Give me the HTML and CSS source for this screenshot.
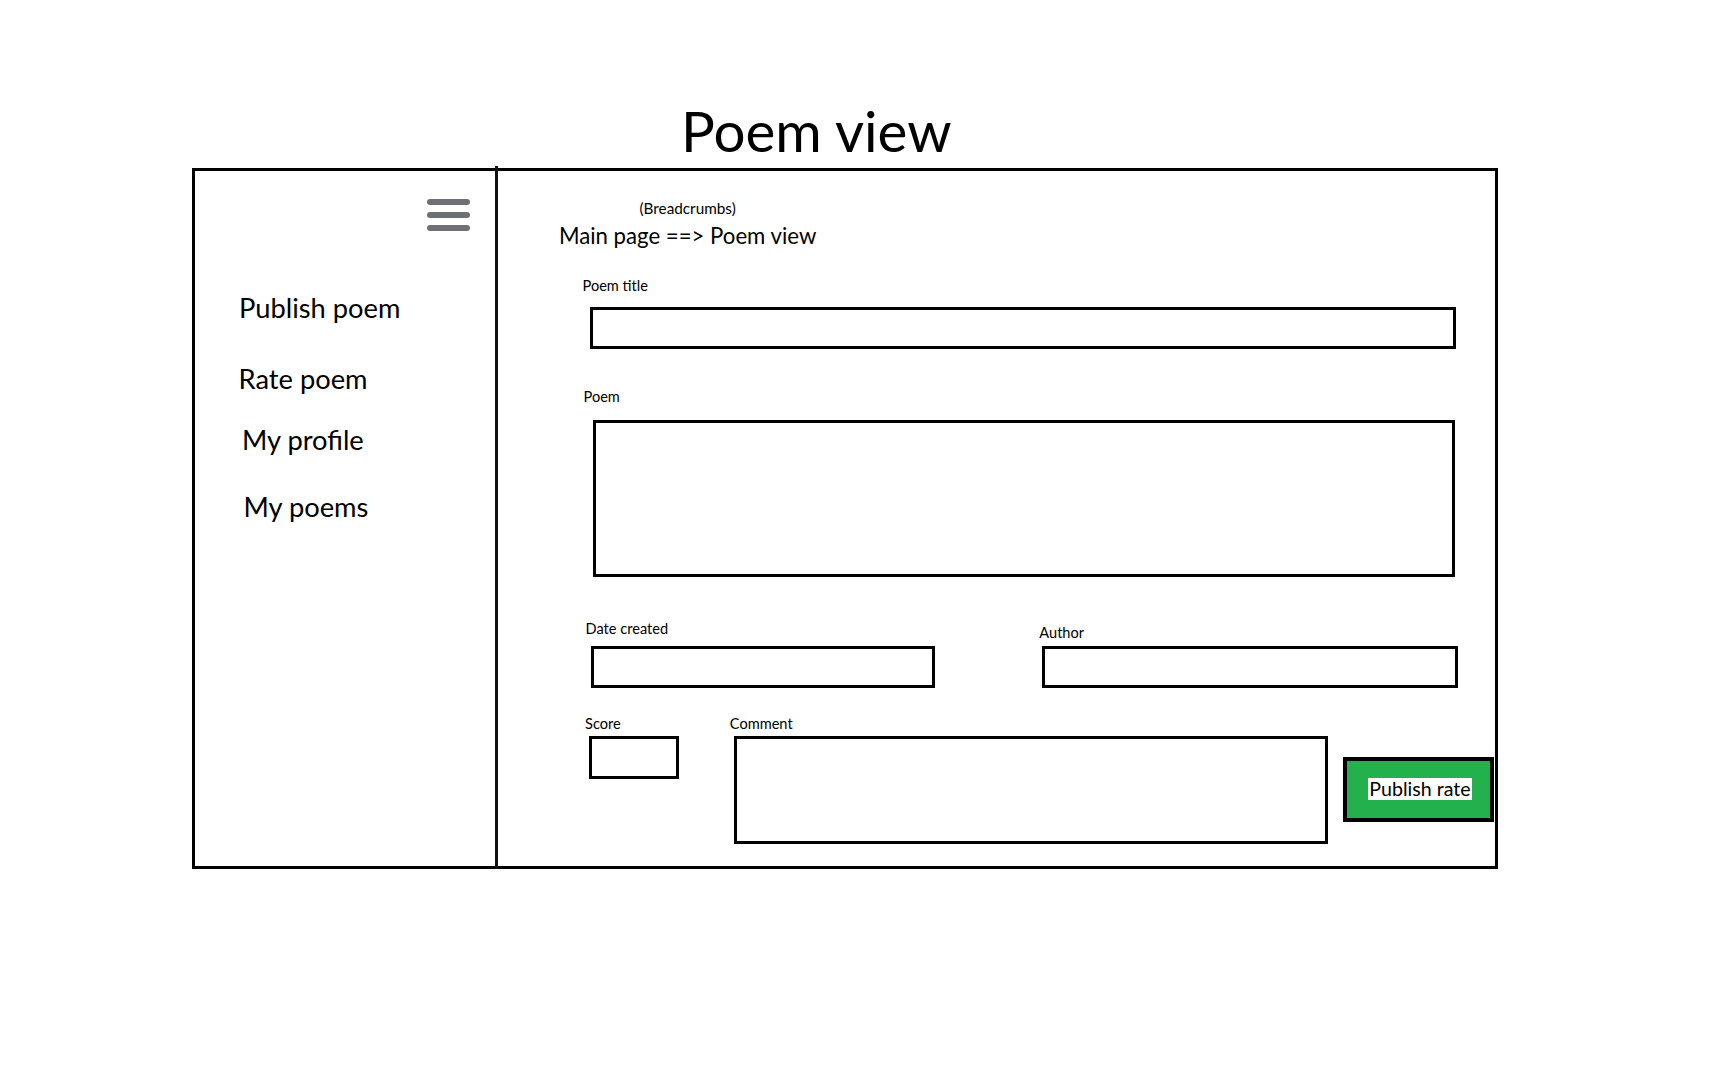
FILE: index.html
```html
<!DOCTYPE html>
<html lang="en">
<head>
<meta charset="utf-8">
<title>Poem view</title>
<link rel="stylesheet" href="styles.css">
</head>
<body>
<h1 class="page-title">Poem view</h1>
<div class="frame">
  <aside class="sidebar">
    <div class="menu-btn" aria-label="Menu"><span></span><span></span><span></span></div>
    <nav class="nav">
      <a class="nav-item nav-publish">Publish poem</a>
      <a class="nav-item nav-rate">Rate poem</a>
      <a class="nav-item nav-profile">My profile</a>
      <a class="nav-item nav-poems">My poems</a>
    </nav>
  </aside>
  <main class="content">
    <div class="crumbs-label">(Breadcrumbs)</div>
    <div class="crumbs">Main page ==&gt; Poem view</div>

    <label class="field-label title-label">Poem title</label>
    <input class="box title-box" type="text">

    <label class="field-label poem-label">Poem</label>
    <textarea class="box poem-box"></textarea>

    <div class="row-meta">
      <div class="col date-col">
        <label class="field-label date-label">Date created</label>
        <input class="box date-box" type="text">
      </div>
      <div class="col author-col">
        <label class="field-label author-label">Author</label>
        <input class="box author-box" type="text">
      </div>
    </div>

    <div class="row-rate">
      <div class="col score-col">
        <label class="field-label score-label">Score</label>
        <input class="box score-box" type="text">
      </div>
      <div class="col comment-col">
        <label class="field-label comment-label">Comment</label>
        <textarea class="box comment-box"></textarea>
      </div>
      <button class="publish-btn" type="button"><span>Publish rate</span></button>
    </div>
  </main>
</div>
</body>
</html>
```
FILE: styles.css
```css
* { box-sizing: border-box; margin: 0; padding: 0; }
html, body { background: #fff; }
body {
  margin: 0;
  font-family: Lato, "Liberation Sans", sans-serif;
  color: #000;
}

.page-title {
  font-size: 56.5px;
  line-height: 56.5px;
  font-weight: 400;
  padding-left: 681px;
  margin-top: 101.7px;
  margin-bottom: 9.8px;
}

.frame {
  display: flex;
  margin-left: 192px;
  width: 1306px;
  height: 701px;
  border: 3px solid #000;
}

.sidebar {
  position: relative;
  width: 303px;
  flex: none;
  border-right: 3px solid #111;
  display: flex;
  flex-direction: column;
}
.sidebar::after {
  content: "";
  position: absolute;
  right: -3px;
  top: -5px;
  bottom: -6px;
  width: 3px;
  background: #111;
}

.menu-btn {
  align-self: flex-end;
  margin: 28px 25px 0 0;
  display: flex;
  flex-direction: column;
  gap: 7px;
}
.menu-btn span {
  display: block;
  width: 43px;
  height: 6px;
  border-radius: 3px;
  background: #6f7073;
}

.nav {
  display: flex;
  flex-direction: column;
  align-items: flex-start;
  margin-top: 63.06px;
}
.nav-item {
  font-size: 27.3px;
  line-height: 27.3px;
  color: #000;
  text-decoration: none;
}
.nav-publish { margin-left: 44px; }
.nav-rate { margin-left: 43.5px; margin-top: 43.7px; }
.nav-profile { margin-left: 47px; margin-top: 33.5px; }
.nav-poems { margin-left: 48.5px; margin-top: 39.4px; }

.content {
  flex: 1;
  display: flex;
  flex-direction: column;
  align-items: flex-start;
}

.crumbs-label {
  font-size: 15.3px;
  line-height: 15.3px;
  margin: 30.4px 0 0 141.5px;
}
.crumbs {
  font-size: 22.2px;
  line-height: 22.2px;
  margin: 8.3px 0 0 60.9px;
}

.field-label {
  display: block;
  font-size: 14.6px;
  line-height: 14.6px;
}

.box {
  display: block;
  border: 3px solid #000;
  border-radius: 0;
  background: #fff;
  outline: none;
  resize: none;
  font: inherit;
  -webkit-appearance: none;
  appearance: none;
}

.title-label { margin: 31.6px 0 0 84.5px; }
.title-box { margin: 13.6px 0 0 92px; width: 866px; height: 42px; }

.poem-label { margin: 41.3px 0 0 85.5px; }
.poem-box { margin: 15.1px 0 0 95px; width: 862px; height: 157px; }

.col {
  display: flex;
  flex-direction: column;
  align-items: flex-start;
}

.row-meta {
  display: flex;
  align-items: flex-start;
  margin-top: 45.3px;
}
.date-col { margin-left: 87.5px; }
.date-box { margin: 9.1px 0 0 5.5px; width: 344px; height: 42px; }
.author-col { margin-left: 104.3px; }
.author-label { margin-top: 4px; }
.author-box { margin: 5.1px 0 0 3px; width: 416px; height: 42px; }

.row-rate {
  display: flex;
  align-items: flex-start;
  margin-top: 29.3px;
}
.score-col { margin-left: 87.1px; }
.score-box { margin: 4.1px 0 0 4.2px; width: 90px; height: 43px; }
.comment-col { margin-left: 50.5px; }
.comment-box { margin: 4.1px 0 0 4.2px; width: 594px; height: 108px; }

.publish-btn {
  margin: 39.7px 0 0 15px;
  width: 151px;
  height: 65px;
  border: 4px solid #000;
  border-radius: 0;
  background: #22b14c;
  display: flex;
  align-items: center;
  justify-content: center;
  font: inherit;
  color: #000;
  cursor: pointer;
}
.publish-btn span {
  background: #fff;
  font-size: 19.6px;
  line-height: 22px;
  padding: 0 1px;
  margin-left: 3px;
}
```
